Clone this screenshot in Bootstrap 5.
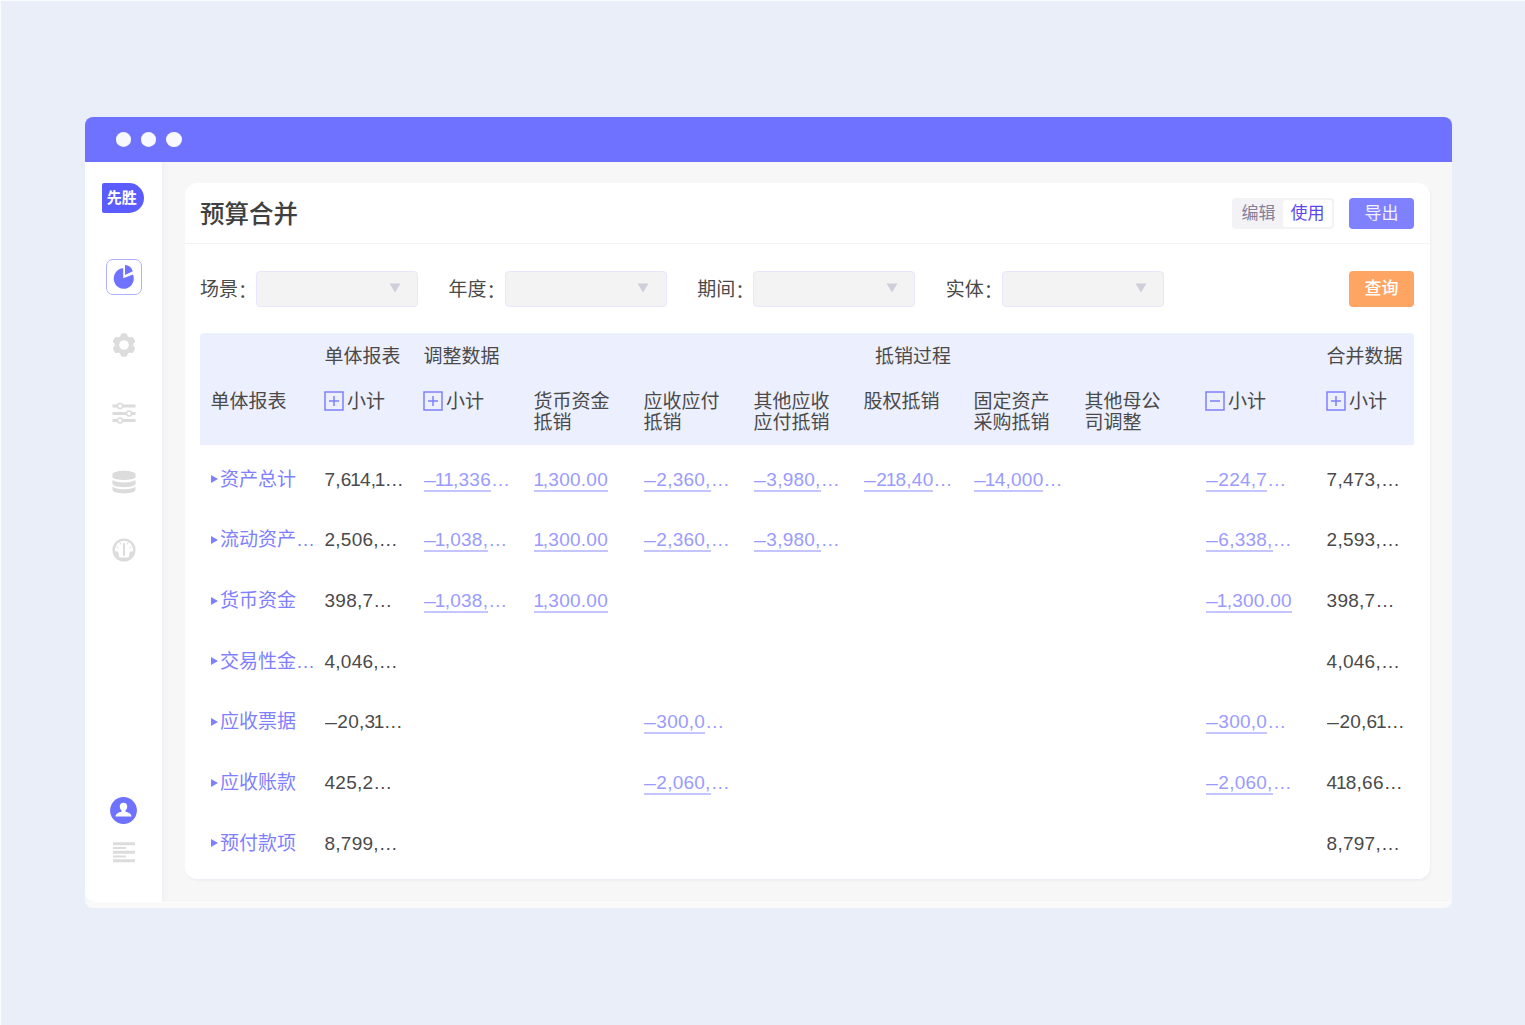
<!DOCTYPE html>
<html lang="zh-CN">
<head>
    <meta charset="UTF-8">
    <meta name="viewport" content="width=device-width, initial-scale=1.0">
    <title>预算合并</title>
    <link href="https://cdn.jsdelivr.net/npm/bootstrap@5.3.0/dist/css/bootstrap.min.css" rel="stylesheet">
    <style>
        body {
            background: #eaeef8;
            font-family: "Liberation Sans", "Noto Sans CJK SC", sans-serif;
            font-size: 19px;
            line-height: 21px;
            color: #4a4a4a;
            min-height: 100vh;
            border: solid #fafbfe;
            border-width: 1px 0 0 1px;
            padding: 116px 73px 0 84px;
        }
        .app-window { height: 791px; border-radius: 8px; background: #f9f9f9; }
        .title-bar { height: 45px; background: #6f72ff; gap: 9.8px; padding-left: 30.5px; }
        .title-bar span { width: 15.5px; height: 15px; border-radius: 50%; background: #f8f9fe; }
        .app-body { height: 741px; background: #f7f7f7; border-bottom: 1px solid #fcfcfc; }
        .side { width: 77px; padding: 21px 0 39px; border-bottom-left-radius: 10px; box-shadow: 3px 0 4px #f0f0f6; }
        .side svg { display: block; flex: none; }
        .logo { width: 42px; height: 30px; border-radius: 2px 15px 15px 2px; background: #5a5cff; font-size: 15px; margin: 0 1.5px 46px 0; padding: 0 2px 1px 0; }
        .active-icon { width: 36px; height: 36px; border: 1.5px solid #b0b1ff; border-radius: 7px; margin-bottom: 38px; }
        .panel { margin: 21px 22px 23px 23px; border-radius: 12px; box-shadow: 1px 2px 2px #eeeef4; }
        .panel-top { height: 61px; border-bottom: 1.5px solid #f3f3f6; padding: 0 16px 0 15px; }
        .panel-top h1 { font-size: 24.5px; line-height: 30px; color: #404040; font-weight: 500; padding-top: 3px; }
        .mode { width: 102px; height: 31px; border-radius: 4px; background: #f3f3f6; padding: 2px; font-size: 17px; color: #85809a; margin-right: 15px; }
        .mode .on { background: #fff; color: #5a48ee; border-radius: 3px; width: 49px; }
        .act { width: 65px; border: 0; border-radius: 4px; padding: 0; font-size: 17px; line-height: 21px; color: #f1f1ff; }
        .act-export { height: 31px; background: #8081ff; }
        .act-query { height: 36px; background: #ffa564; color: #fff; font-weight: 500; }
        .filters { padding: 26.5px 16px 0 15px; gap: 30px; }
        .filters label { width: 56.3px; white-space: nowrap; padding-top: 1px; }
        .filters .colon { font-family: "Noto Sans CJK SC", sans-serif; font-feature-settings: "halt"; }
        .pick { width: 162px; height: 36px; border: 1.5px solid #e6e7fc; border-radius: 4px; background: #f3f3f3; padding: 0 16.5px 2px 0; margin-right: .3px; }
        .grid { width: 1214px; margin: 26.5px 0 0 15px; table-layout: fixed; border-collapse: separate; border-spacing: 0; }
        .grid th, .grid td { padding: 0 0 0 10.5px; font-weight: 400; white-space: nowrap; text-align: left; }
        .grid thead th { background: #eceffe; vertical-align: top; }
        .grid thead tr:first-child th { height: 57px; padding-top: 12.5px; }
        .grid thead tr:last-child th { height: 55px; padding-top: .5px; }
        .grid thead tr:first-child th:first-child { border-top-left-radius: 4px; }
        .grid thead tr:first-child th:last-child { border-top-right-radius: 4px; }
        .grid thead th.wide { text-align: center; padding-left: 0; padding-right: 13px; }
        .grid thead svg { margin: -3px 3.5px 0 -1px; }
        .grid tbody::before { content: ""; display: block; height: 4px; }
        .grid tbody td { height: 60.65px; vertical-align: middle; letter-spacing: .25px; font-kerning: none; }
        .grid tbody td:first-child { color: #7f80ff; padding-left: 10px; letter-spacing: 0; }
        .grid tbody td:first-child svg { margin: -3px 2.5px 0 .5px; }
        .grid tbody td.num { color: #9a9bff; }
        .num u { text-decoration: none; border-bottom: 2px solid #c4c5ff; }
        /* narrow ones and a wide minus */
        .one { margin: 0 -1px 0 -1.5px; }
        .one.start { margin: 0 -1.5px 0 0; }
        .dash { display: inline-block; transform: scaleX(1.12); transform-origin: left; margin-right: 2px; }
    </style>
</head>
<body>
    <div class="app-window overflow-hidden">
        <div class="title-bar d-flex align-items-center"><span></span><span></span><span></span></div>
        <div class="app-body d-flex overflow-hidden">
            <nav class="side bg-white d-flex flex-column align-items-center">
                <div class="logo d-flex align-items-center justify-content-center text-white fw-bold">先胜</div>
                <div class="active-icon d-flex align-items-center justify-content-center">
                    <svg width="22" height="26" viewBox="0.300 0.300 22 26"><path d="M10.500 4.500v10l9.800-3.600A10 10.300 0 1 1 10.500 4.500z" fill="#6f72ff"/><path d="M12.300 1.300a9 9 0 0 1 7.800 6.300l-7.800 3.600z" fill="#6f72ff"/></svg>
                </div>
                <svg width="24" height="24" viewBox="0 0 24 24" style="margin-bottom:44px"><g fill="#dcdcdc"><circle cx="12" cy="12" r="9.500"/><rect id="tooth" x="8.500" y=".3" width="7" height="23.400" rx="2.500"/><use href="#tooth" transform="rotate(60 12 12)"/><use href="#tooth" transform="rotate(120 12 12)"/></g><circle cx="12" cy="12" r="4.800" fill="#fff"/></svg>
                <svg width="24" height="24" viewBox="0 0 24 24" style="margin-bottom:45px"><path d="M.5 5h23M.5 12.500h23M.5 19.500h23" stroke="#dcdcdc" stroke-width="3"/><g fill="#fff" stroke="#dcdcdc" stroke-width="1.500"><circle cx="8" cy="5" r="2.500"/><circle cx="17" cy="12.500" r="2.500"/><circle cx="8" cy="19.500" r="2.500"/></g></svg>
                <svg width="24" height="24" viewBox="0 0 24 24" style="margin-bottom:44px"><g fill="#dcdcdc"><path d="M.5 4.500C.5-.5 23.500-.5 23.500 4.500v3c-2 3.300-21 3.300-23 0z"/><path d="M.5 10c4 3.300 19 3.300 23 0v4.300c-2 3.800-21 3.800-23 0z"/><path d="M.5 16.800c4 3.300 19 3.300 23 0v3.500c-2 4.200-21 4.200-23 0z"/></g></svg>
                <svg width="24" height="24" viewBox="0 0 24 24"><circle cx="12" cy="12" r="10.400" fill="none" stroke="#dcdcdc" stroke-width="2.300"/><path d="M2 13.500h4l1.500 6h9l1.500-6h4l-3 6.500-7 3-7-3z" fill="#dcdcdc"/><path d="M12 6v11" stroke="#dcdcdc" stroke-width="2" stroke-linecap="round"/><path d="M4.500 8.500l2 1.500M8 4.500l.8 2M16 4.500l-.8 2M19.500 8.500l-2 1.500" stroke="#dcdcdc"/></svg>
                <svg class="mt-auto" width="27" height="27" viewBox="0 0 27 27" style="margin-bottom:18px"><circle cx="13.500" cy="13.500" r="13.400" fill="#6f72ff"/><path d="M13.500 5.800c2.400 0 4 1.500 3.700 4.200-.2 1.800-.8 2.600-1.700 3.500v1.300c2.800.8 5.500 1.500 6 4.700h-16c.5-3.200 3.200-3.900 6-4.700v-1.300c-.9-.9-1.500-1.700-1.700-3.500-.3-2.700 1.300-4.200 3.700-4.200z" fill="#fff"/></svg>
                <svg width="22" height="21" viewBox="0 0 22 21"><path d="M0 1.800h22M0 10.200h22M0 18.800h22" stroke="#dcdcdc" stroke-width="3"/><path d="M0 6h13M0 14.500h13" stroke="#dcdcdc" stroke-width="2"/></svg>
            </nav>
            <main class="panel bg-white flex-grow-1">
                <div class="panel-top d-flex align-items-center">
                    <h1 class="mb-0 me-auto">预算合并</h1>
                    <div class="mode d-flex align-items-stretch">
                        <span class="flex-grow-1 d-flex align-items-center justify-content-center">编辑</span>
                        <span class="on d-flex align-items-center justify-content-center">使用</span>
                    </div>
                    <button type="button" class="btn act act-export">导出</button>
                </div>
                <form class="filters d-flex align-items-center">
                    <button type="button" class="btn act act-query ms-auto">查询</button>
                </form>
                <table class="grid">
                    <colgroup>
                        <col style="width:114px"><col style="width:99px"><col style="width:110px"><col style="width:110px"><col style="width:110px"><col style="width:110px"><col style="width:110px"><col style="width:111px"><col style="width:121px"><col style="width:121px"><col style="width:98px">
                    </colgroup>
                    <thead>
                        <tr>
                            <th></th>
                            <th>单体报表</th>
                            <th>调整数据</th>
                            <th class="wide" colspan="7">抵销过程</th>
                            <th>合并数据</th>
                        </tr>
                        <tr>
                            <th>单体报表</th>
                            <th><svg width="20" height="20"><use href="#plus"/></svg>小计</th>
                            <th><svg width="20" height="20"><use href="#plus"/></svg>小计</th>
                            <th>货币资金<br>抵销</th>
                            <th>应收应付<br>抵销</th>
                            <th>其他应收<br>应付抵销</th>
                            <th>股权抵销</th>
                            <th>固定资产<br>采购抵销</th>
                            <th>其他母公<br>司调整</th>
                            <th><svg width="20" height="20"><use href="#minus"/></svg>小计</th>
                            <th><svg width="20" height="20"><use href="#plus"/></svg>小计</th>
                        </tr>
                    </thead>
                    <tbody id="rows"></tbody>
                </table>
            </main>
        </div>
    </div>

    <svg class="d-none">
        <symbol id="plus" viewBox="0 0 20 20"><path d="M1 1h18v18H1zM10 5v10M5 10h10" fill="none" stroke="#7f80ff" stroke-width="1.500"/></symbol>
        <symbol id="minus" viewBox="0 0 20 20"><path d="M1 1h18v18H1zM5 10h10" fill="none" stroke="#7f80ff" stroke-width="1.500"/></symbol>
    </svg>

    <script src="https://cdn.jsdelivr.net/npm/bootstrap@5.3.0/dist/js/bootstrap.bundle.min.js"></script>
    <script>
        const filters = ['场景', '年度', '期间', '实体'];
        const query = document.querySelector('.act-query');
        filters.forEach(function(name) {
            query.insertAdjacentHTML('beforebegin',
                '<div class="d-flex align-items-center"><label class="d-flex"><span>' + name + '</span><span class="colon">：</span></label>' +
                '<div class="pick d-flex align-items-center justify-content-end">' +
                '<svg width="12" height="10" viewBox="0 0 12 10"><path d="M.5.500h11L6 9.500z" fill="#cfcfdc"/></svg></div></div>');
        });

        // 科目, 单体, 调整, 货币资金, 应收应付, 其他应收应付, 股权, 固定资产, 其他母公司, 小计, 合并
        const data = [
            ['资产总计', '7,614,1…', '–11,336…', '1,300.00', '–2,360,…', '–3,980,…', '–218,40…', '–14,000…', '', '–224,7…', '7,473,…'],
            ['流动资产…', '2,506,…', '–1,038,…', '1,300.00', '–2,360,…', '–3,980,…', '', '', '', '–6,338,…', '2,593,…'],
            ['货币资金', '398,7…', '–1,038,…', '1,300.00', '', '', '', '', '', '–1,300.00', '398,7…'],
            ['交易性金…', '4,046,…', '', '', '', '', '', '', '', '', '4,046,…'],
            ['应收票据', '–20,31…', '', '', '–300,0…', '', '', '', '', '–300,0…', '–20,61…'],
            ['应收账款', '425,2…', '', '', '–2,060,…', '', '', '', '', '–2,060,…', '418,66…'],
            ['预付款项', '8,799,…', '', '', '', '', '', '', '', '', '8,797,…']
        ];
        const arrow = '<svg width="7" height="8" viewBox="0 0 7 8"><path d="M0 0l7 4-7 4z" fill="#7f80ff"/></svg>';

        function digits(text) {
            return text.replace(/1|–/g, function(ch, pos) {
                if (ch === '–') return '<span class="dash">–</span>';
                return '<span class="one' + (pos === 0 ? ' start' : '') + '">1</span>';
            });
        }

        document.getElementById('rows').innerHTML = data.map(function(row) {
            return '<tr>' + row.map(function(text, i) {
                if (i === 0) return '<td>' + arrow + text + '</td>';
                if (i === 1 || i === 10 || !text) return '<td>' + digits(text) + '</td>';
                const cut = text.endsWith('…');
                return '<td class="num"><u>' + digits(text.replace('…', '')) + '</u>' + (cut ? '…' : '') + '</td>';
            }).join('') + '</tr>';
        }).join('');
    </script>
</body>
</html>
